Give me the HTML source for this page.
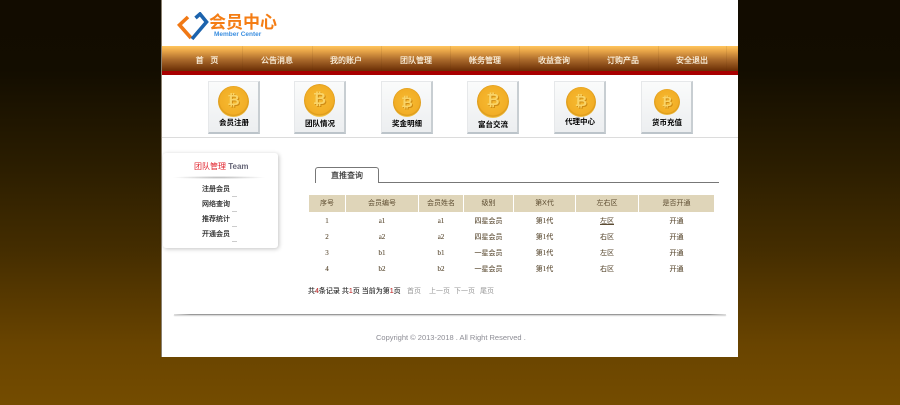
<!DOCTYPE html>
<html lang="zh"><head><meta charset="utf-8"><title>会员中心</title>
<style>
*{box-sizing:border-box;margin:0;padding:0}
html,body{width:900px;height:405px;overflow:hidden}
body{position:relative;font-family:"Liberation Sans","Noto Sans CJK SC",sans-serif;background:linear-gradient(#120c00 0,#130d00 70px,#2c1e00 170px,#442d00 250px,#694400 345px,#744c00 405px)}
body>*{filter:blur(.3px)}
.a{position:absolute;white-space:nowrap}
#p{position:absolute;left:162px;top:0;width:576px;height:357px;background:#fff}
#edge{position:absolute;left:161px;top:0;width:1px;height:357px;background:#8a8070}
#nav{position:absolute;left:162px;top:46px;width:576px;height:29px;background:linear-gradient(#ffc55c 0,#e8a548 5px,#a9682a 14px,#6e3208 24px,#6e3208 25px,#a80000 25px,#a80000 29px)}
.nt{position:absolute;top:9px;height:11px;line-height:11px;font-size:8px;color:#fbf1de;text-align:center;width:70px;-webkit-text-stroke:.2px #fbf1de}
.sep{position:absolute;top:0;width:1px;height:26px;background:rgba(90,45,10,.1)}
.box{position:absolute;top:81px;width:52px;height:53px;background:linear-gradient(#fafbfb,#eceef0);border:1px solid #e6e8ea;border-right:2px solid #c8ced2;border-bottom:2px solid #bcc4ca}
.coin{position:absolute;border-radius:50%;background:radial-gradient(circle at 50% 47%,#f6bb32 0,#f2ae26 60%,#dc9a1a 66%,#fad25a 74%,#f2b42c 90%,#d8960f 100%);color:#f9d468;font-weight:bold;text-shadow:1px 1px 0 #cf8a12;text-align:center;font-family:"Liberation Sans","DejaVu Sans",sans-serif}
.lb{position:absolute;left:0;width:50px;text-align:center;font-size:7.500px;line-height:10px;color:#000;font-weight:bold}
.h{position:absolute;top:195px;height:17px;background:#dfd5b9;color:#5c4c30;font-size:7px;line-height:17px;text-align:center}
.d{position:absolute;height:12px;line-height:12px;font-size:7px;color:#5c4c34;text-align:center;font-family:"Liberation Serif","Noto Sans CJK SC",serif;-webkit-text-stroke:.1px #5c4c34}
.m{position:absolute;left:202px;font-size:7px;line-height:10px;color:#222;white-space:nowrap;-webkit-text-stroke:.15px #222}
.t{position:absolute;width:5px;height:1px;background:#ccc;left:232px}
.pg{position:absolute;top:286px;font-size:7px;line-height:12px;color:#999;white-space:nowrap}
</style></head><body>
<div id="edge"></div>
<div id="p"></div>

<svg class="a" style="left:177px;top:12px" width="32" height="30" viewBox="0 0 32 30"><path d="M11 5 L2.500 13 L14 26" fill="none" stroke="#f07814" stroke-width="3.600"/><path d="M18.500 6 L23 2 L29.500 10 L15 27" fill="none" stroke="#1c63ad" stroke-width="3.600"/></svg>
<div class="a" style="left:209px;top:12px;font-size:17px;line-height:22px;font-weight:bold;color:#f47d14">会员中心</div>
<div class="a" style="left:214px;top:30px;font-size:6.500px;line-height:9px;font-weight:bold;color:#3c8fe0">Member Center</div>

<div id="nav">
<div class="sep" style="left:80px"></div><div class="sep" style="left:150px"></div><div class="sep" style="left:219px"></div><div class="sep" style="left:288px"></div><div class="sep" style="left:357px"></div><div class="sep" style="left:426px"></div><div class="sep" style="left:496px"></div><div class="sep" style="left:564px"></div>
<div class="nt" style="left:10px">首&nbsp;&nbsp;&nbsp;页</div>
<div class="nt" style="left:80px">公告消息</div>
<div class="nt" style="left:149px">我的账户</div>
<div class="nt" style="left:219px">团队管理</div>
<div class="nt" style="left:288px">帐务管理</div>
<div class="nt" style="left:357px">收益查询</div>
<div class="nt" style="left:426px">订购产品</div>
<div class="nt" style="left:495px">安全退出</div>
</div>

<div class="box" style="left:208px"><div class="coin" style="left:9px;top:4px;width:31px;height:31px;font-size:15px;line-height:30px">₿</div><div class="lb" style="top:36px">会员注册</div></div>
<div class="box" style="left:294px"><div class="coin" style="left:9px;top:2px;width:31px;height:33px;font-size:16px;line-height:32px">₿</div><div class="lb" style="top:37px">团队情况</div></div>
<div class="box" style="left:381px"><div class="coin" style="left:11px;top:6px;width:28px;height:29px;font-size:14px;line-height:28px">₿</div><div class="lb" style="top:37px">奖金明细</div></div>
<div class="box" style="left:467px"><div class="coin" style="left:9px;top:3px;width:32px;height:33px;font-size:16px;line-height:32px">₿</div><div class="lb" style="top:38px">富台交流</div></div>
<div class="box" style="left:554px"><div class="coin" style="left:11px;top:5px;width:30px;height:30px;font-size:15px;line-height:29px">₿</div><div class="lb" style="top:35px">代理中心</div></div>
<div class="box" style="left:641px"><div class="coin" style="left:12px;top:7px;width:26px;height:26px;font-size:13px;line-height:25px">₿</div><div class="lb" style="top:36px">货币充值</div></div>

<div class="a" style="left:162px;top:137px;width:576px;height:1px;background:#dcdcdc"></div>

<!-- sidebar -->
<div class="a" style="left:163px;top:153px;width:115px;height:95px;background:#fff;border-radius:3px;box-shadow:1px 1px 4px rgba(0,0,0,.24)"></div>
<div class="a" style="left:194px;top:161px;font-size:8px;line-height:11px;color:#e0202a">团队管理 <span style="color:#667;font-weight:bold">Team</span></div>
<div class="a" style="left:172px;top:176px;width:94px;height:3px;background:radial-gradient(ellipse at center,rgba(0,0,0,.28),rgba(0,0,0,0) 70%)"></div>
<div class="m" style="top:185px">注册会员</div><div class="t" style="top:196px"></div>
<div class="m" style="top:200px">网络查询</div><div class="t" style="top:211px"></div>
<div class="m" style="top:215px">推荐统计</div><div class="t" style="top:226px"></div>
<div class="m" style="top:230px">开通会员</div><div class="t" style="top:241px"></div>

<!-- tab -->
<div class="a" style="left:315px;top:167px;width:64px;height:16px;border:1px solid #777;border-bottom:0;border-radius:3px 3px 0 0;background:#fff;text-align:center;font-size:8px;line-height:15px;color:#333;-webkit-text-stroke:.15px #333">直推查询</div>
<div class="a" style="left:379px;top:182px;width:340px;height:1px;background:#777"></div>

<!-- table -->
<div class="h" style="left:309px;width:36px">序号</div>
<div class="h" style="left:346px;width:72px">会员编号</div>
<div class="h" style="left:419px;width:44px">会员姓名</div>
<div class="h" style="left:464px;width:49px">级别</div>
<div class="h" style="left:514px;width:61px">第X代</div>
<div class="h" style="left:576px;width:62px">左右区</div>
<div class="h" style="left:639px;width:75px">是否开通</div>

<div class="d" style="left:309px;width:36px;top:215px">1</div><div class="d" style="left:346px;width:72px;top:215px">a1</div><div class="d" style="left:419px;width:44px;top:215px">a1</div><div class="d" style="left:464px;width:49px;top:215px">四星会员</div><div class="d" style="left:514px;width:61px;top:215px">第1代</div><div class="d" style="left:576px;width:62px;top:215px"><u>左区</u></div><div class="d" style="left:639px;width:75px;top:215px">开通</div>
<div class="d" style="left:309px;width:36px;top:231px">2</div><div class="d" style="left:346px;width:72px;top:231px">a2</div><div class="d" style="left:419px;width:44px;top:231px">a2</div><div class="d" style="left:464px;width:49px;top:231px">四星会员</div><div class="d" style="left:514px;width:61px;top:231px">第1代</div><div class="d" style="left:576px;width:62px;top:231px">右区</div><div class="d" style="left:639px;width:75px;top:231px">开通</div>
<div class="d" style="left:309px;width:36px;top:247px">3</div><div class="d" style="left:346px;width:72px;top:247px">b1</div><div class="d" style="left:419px;width:44px;top:247px">b1</div><div class="d" style="left:464px;width:49px;top:247px">一星会员</div><div class="d" style="left:514px;width:61px;top:247px">第1代</div><div class="d" style="left:576px;width:62px;top:247px">左区</div><div class="d" style="left:639px;width:75px;top:247px">开通</div>
<div class="d" style="left:309px;width:36px;top:263px">4</div><div class="d" style="left:346px;width:72px;top:263px">b2</div><div class="d" style="left:419px;width:44px;top:263px">b2</div><div class="d" style="left:464px;width:49px;top:263px">一星会员</div><div class="d" style="left:514px;width:61px;top:263px">第1代</div><div class="d" style="left:576px;width:62px;top:263px">右区</div><div class="d" style="left:639px;width:75px;top:263px">开通</div>

<div class="pg" style="left:308px;color:#222;-webkit-text-stroke:.1px #222">共<span style="color:#e33">4</span>条记录 共<span style="color:#e33">1</span>页 当前为第<span style="color:#e33">1</span>页</div>
<div class="pg" style="left:407px">首页</div>
<div class="pg" style="left:429px">上一页</div>
<div class="pg" style="left:454px">下一页</div>
<div class="pg" style="left:480px">尾页</div>

<div class="a" style="left:174px;top:314px;width:552px;height:1px;background:linear-gradient(90deg,#ddd,#999 3%,#999 97%,#ddd);box-shadow:0 1px 1px rgba(0,0,0,.22)"></div>

<div class="a" style="left:376px;top:332px;font-size:7.500px;line-height:11px;color:#8c8c94">Copyright © 2013-2018 . All Right Reserved .</div>
</body></html>
